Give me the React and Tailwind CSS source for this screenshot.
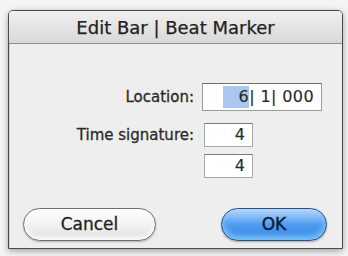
export default function App() {
  const font = { fontFamily: '"DejaVu Sans", "Liberation Sans", sans-serif' };
  return (
    <div
      className="w-[348px] h-[256px] bg-[#f4f4f4] pt-[10px] pl-[8px] pr-[5px] pb-[7px] overflow-hidden"
      style={font}
    >
      <div className="h-full flex flex-col border border-[#4a4a4a] rounded-t-[5px] bg-[#ededed] shadow-[0_2px_6px_rgba(0,0,0,0.35)] overflow-hidden">
        <div className="h-[33px] shrink-0 flex items-center justify-center bg-gradient-to-b from-[#f0f0f0] to-[#d9d9d9] border-b border-[#8e8e8e] text-[18px] text-[#222] [-webkit-text-stroke:0.25px_#222]">
          Edit Bar | Beat Marker
        </div>
        <div className="flex-1 flex flex-col bg-[#eeeeee] border-l border-[#d0d0d0]">
          <div className="grid grid-cols-[184px_1fr] items-center gap-x-[8px] mt-[39px] text-[15px] text-[#2a2a2a] [-webkit-text-stroke:0.3px_#2a2a2a]">
            <div className="text-right">Location:</div>
            <div className="h-[28px] w-[120px] bg-white border border-[#9a9a9a] border-t-[#6f6f6f] flex items-center justify-end pr-[7px] text-[16px] text-[#2a2a2a] [-webkit-text-stroke:0.15px_#2a2a2a] tracking-[0.4px]">
              <span className="bg-[#a9c7ef] h-[22px] w-[26px] flex items-center justify-end">6</span>
              <span>| 1| 000</span>
            </div>
            <div className="text-right mt-[12px]">Time signature:</div>
            <div className="h-[24px] w-[49px] ml-[2px] mt-[12px] bg-white border border-[#a8a8a8] border-t-[#7a7a7a] flex items-center justify-end pr-[7px] text-[16px] [-webkit-text-stroke:0.15px_#2a2a2a]">
              4
            </div>
            <div />
            <div className="h-[24px] w-[49px] ml-[2px] mt-[7px] bg-white border border-[#a8a8a8] border-t-[#7a7a7a] flex items-center justify-end pr-[7px] text-[16px] [-webkit-text-stroke:0.15px_#2a2a2a]">
              4
            </div>
          </div>
          <div className="flex justify-between items-center mt-[30px] pl-[13px] pr-[15px]">
            <div className="h-[33px] w-[133px] rounded-full border border-[#707070] bg-gradient-to-b from-[#ffffff] via-[#f2f2f2] to-[#dedede] shadow-[inset_0_-3px_5px_rgba(255,255,255,0.9),0_1px_2px_rgba(0,0,0,0.25)] flex items-center justify-center text-[17px] text-[#222] [-webkit-text-stroke:0.3px_#222]">
              Cancel
            </div>
            <div className="h-[33px] w-[106px] rounded-full border border-[#2a4f8f] bg-gradient-to-b from-[#b9d9fb] via-[#4f9cf0] to-[#2f7fe6] shadow-[inset_0_-4px_6px_rgba(150,220,255,0.8),0_1px_2px_rgba(0,0,0,0.3)] flex items-center justify-center text-[17px] text-[#0c1c3a] [-webkit-text-stroke:0.4px_#0c1c3a]">
              OK
            </div>
          </div>
        </div>
      </div>
    </div>
  );
}
